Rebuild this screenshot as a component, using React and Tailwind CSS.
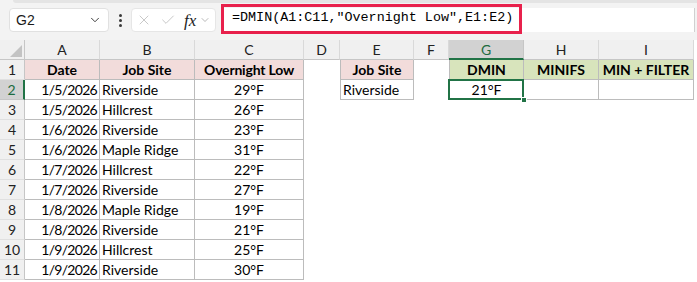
import { ChevronDown, X, Check } from 'lucide-react';

const data = [
  ['1/5/2026', 'Riverside', '29°F'],
  ['1/5/2026', 'Hillcrest', '26°F'],
  ['1/6/2026', 'Riverside', '23°F'],
  ['1/6/2026', 'Maple Ridge', '31°F'],
  ['1/7/2026', 'Hillcrest', '22°F'],
  ['1/7/2026', 'Riverside', '27°F'],
  ['1/8/2026', 'Maple Ridge', '19°F'],
  ['1/8/2026', 'Riverside', '21°F'],
  ['1/9/2026', 'Hillcrest', '25°F'],
  ['1/9/2026', 'Riverside', '30°F'],
];

const cols = ['A', 'B', 'C', 'D', 'E', 'F', 'G', 'H', 'I'];

function ColHead({ label }) {
  const active = label === 'G';
  return (
    <div
      className={
        active
          ? 'h-5 flex items-center justify-center bg-[#d2d2d2] border-r border-[#c6c6c6] border-b-2 border-b-[#217346] text-[#1d6b40] text-[14px]'
          : 'h-5 flex items-center justify-center bg-[#f0f0f0] border-r border-[#d9d9d9] border-b border-b-[#c6c6c6] text-[#222] text-[14px]'
      }
    >
      {label}
    </div>
  );
}

function RowHead({ n }) {
  const active = n === 2;
  return (
    <div
      className={
        active
          ? 'h-5 flex items-center justify-center bg-[#d2d2d2] border-r-2 border-[#217346] border-b border-b-[#c6c6c6] text-[#1d6b40] text-[14px]'
          : 'h-5 flex items-center justify-center bg-[#f0f0f0] border-r border-[#c6c6c6] border-b border-b-[#e0e0e0] text-[#222] text-[14px]'
      }
    >
      {n}
    </div>
  );
}

function Cell({ children, className = '' }) {
  return <div className={'h-5 leading-[19px] text-[14px] text-black whitespace-nowrap overflow-visible ' + className}>{children}</div>;
}

const tb = 'border-r border-b border-[#bcbcbc]';

export default function App() {
  return (
    <div className="w-[697px] h-[282px] bg-white overflow-hidden" style={{ fontFamily: 'Lato, "Liberation Sans", sans-serif' }}>
      {/* formula bar */}
      <div className="bg-[#f3f3f3] h-10 relative">
        <div className="ml-[13px] h-[3px] bg-[#e4e4e4] rounded-bl-[3px]" />
        <div className="flex items-center h-[37px] pl-[9px] pb-[3px]">
          <div className="w-[100px] h-6 bg-white border border-[#e1e1e1] rounded-[4px] flex items-center justify-between pl-[6px] pr-[6px]" style={{ fontFamily: '"Liberation Sans", sans-serif' }}>
            <span className="text-[14px] text-[#1a1a1a]">G2</span>
            <ChevronDown size={14} strokeWidth={1.6} className="text-[#333]" />
          </div>
          <div className="w-[22px] flex flex-col items-center gap-[2px]">
            <span className="w-[3px] h-[3px] bg-[#3a3a3a] rounded-full" />
            <span className="w-[3px] h-[3px] bg-[#3a3a3a] rounded-full" />
            <span className="w-[3px] h-[3px] bg-[#3a3a3a] rounded-full" />
          </div>
          <div className="w-[85px] h-6 bg-white border border-[#e6e6e6] rounded-[4px] flex items-center pl-[4px] gap-[8px]">
            <X size={16} strokeWidth={1.1} className="text-[#b4b4b4]" />
            <Check size={16} strokeWidth={1.1} className="text-[#b4b4b4]" />
            <span className="flex items-center gap-[3px]">
              <span className="text-[17px] italic text-[#222] leading-none" style={{ fontFamily: '"Liberation Serif", serif' }}>fx</span>
              <ChevronDown size={12} strokeWidth={1.4} className="text-[#999]" />
            </span>
          </div>
          <div className="ml-[5px] w-[474px] h-6 bg-white border-r border-[#d0d0d0] flex items-center">
            <div className="w-[301px] h-[30px] mb-[3px] border-[3px] border-[#e8214c] flex items-center pl-[8px] text-[13.4px] text-black" style={{ fontFamily: '"Liberation Mono", monospace' }}>
              =DMIN(A1:C11,"Overnight Low",E1:E2)
            </div>
          </div>
        </div>
      </div>

      {/* grid */}
      <div className="grid grid-cols-[25px_75px_95px_109px_36px_74px_35px_75px_75px_95px]">
        <div className="h-5 bg-[#f0f0f0] border-r border-b border-[#c6c6c6] flex items-end justify-end p-[2px]">
          <div className="w-0 h-0 border-l-[12px] border-l-transparent border-b-[12px] border-b-[#c3c3c3]" />
        </div>
        {cols.map((c) => (
          <ColHead key={c} label={c} />
        ))}

        {/* row 1 */}
        <RowHead n={1} />
        <Cell className={tb + ' bg-[#f2dcdb] font-bold text-center'}>Date</Cell>
        <Cell className={tb + ' bg-[#f2dcdb] font-bold text-center'}>Job Site</Cell>
        <Cell className={tb + ' bg-[#f2dcdb] font-bold text-center tracking-[-0.2px]'}>Overnight Low</Cell>
        <Cell />
        <Cell className={tb + ' border-l bg-[#f2dcdb] font-bold text-center'}>Job Site</Cell>
        <Cell />
        <Cell className={tb + ' border-l bg-[#d8e4bc] font-bold text-center'}>DMIN</Cell>
        <Cell className={tb + ' bg-[#d8e4bc] font-bold text-center'}>MINIFS</Cell>
        <Cell className={tb + ' bg-[#d8e4bc] font-bold text-center'}>MIN + FILTER</Cell>

        {data.map((r, i) => {
          const n = i + 2;
          return [
            <RowHead key={'h' + n} n={n} />,
            <Cell key={'a' + n} className={tb + ' text-right pr-[2px] tracking-[-0.7px]'}>{r[0]}</Cell>,
            <Cell key={'b' + n} className={tb + ' pl-[2px]'}>{r[1]}</Cell>,
            <Cell key={'c' + n} className={tb + ' text-center'}>{r[2]}</Cell>,
            <Cell key={'d' + n} />,
            n === 2 ? (
              <Cell key={'e' + n} className={tb + ' border-l pl-[2px]'}>Riverside</Cell>
            ) : (
              <Cell key={'e' + n} />
            ),
            <Cell key={'f' + n} />,
            n === 2 ? (
              <div key={'g' + n} className={'relative h-5 leading-[19px] text-[14px] text-black text-center ' + tb + ' border-l'}>
                21°F
                <div className="absolute -left-[2px] -top-[1px] -right-[1px] -bottom-[1px] border-2 border-[#217346]" />
                <div className="absolute -right-[4px] -bottom-[4px] w-[6px] h-[6px] bg-[#217346] border border-white" />
              </div>
            ) : (
              <Cell key={'g' + n} />
            ),
            n === 2 ? <Cell key={'hh' + n} className={tb} /> : <Cell key={'hh' + n} />,
            n === 2 ? <Cell key={'i' + n} className={tb} /> : <Cell key={'i' + n} />,
          ];
        })}
      </div>
    </div>
  );
}
